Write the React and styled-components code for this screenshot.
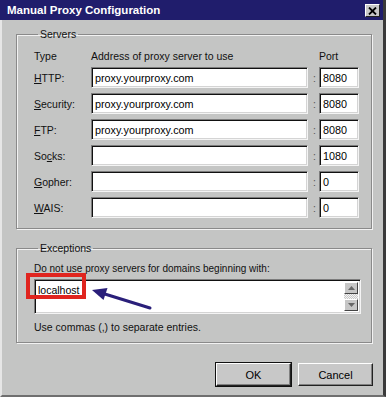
import React from 'react'
import styled, {createGlobalStyle} from 'styled-components'

const Global = createGlobalStyle`
  html, body { margin: 0; padding: 0; background: #c4c5c4; }
  body { font-family: "Liberation Sans", Arial, sans-serif; font-size: 10.5px; color: #111; }
`

const Window = styled.div`
  width: 386px;
  height: 397px;
  box-sizing: border-box;
  background: #c4c5c4;
  border-left: 2px solid #e6e6e6;
  border-right: 3px solid #3a3a3a;
  border-bottom: 2px solid #6f6f6f;
  display: flex;
  flex-direction: column;
`

const TitleBar = styled.div`
  height: 20px;
  margin-left: -2px;
  background: #201d6c;
  color: #fff;
  font-weight: bold;
  font-size: 11.5px;
  display: flex;
  align-items: center;
  justify-content: space-between;
  padding: 0 3px 0 7px;
`

const CloseBtn = styled.div`
  width: 15px;
  height: 13px;
  background: #c8c8c8;
  box-sizing: border-box;
  border-top: 1px solid #fff;
  border-left: 1px solid #fff;
  border-right: 1px solid #222;
  border-bottom: 1px solid #222;
  display: flex;
  align-items: center;
  justify-content: center;
  margin-top: 1px;
`

const Body = styled.div`
  flex: 1;
  padding: 8px 11px 0 14px;
  display: flex;
  flex-direction: column;
`

const Group = styled.fieldset`
  margin: ${p => p.$m || 0};
  padding: ${p => p.$pad};
  border: 1px solid #8a8a8a;
  box-shadow: inset 1px 1px #f2f2f2, 1px 1px #f2f2f2;
  min-width: 0;
`

const Legend = styled.legend`
  padding: 0 2px;
  margin-left: 4px;
  line-height: 13px;
`

const ServerGrid = styled.div`
  display: grid;
  grid-template-columns: 57px 217px 11px 40px;
  grid-auto-rows: 21px;
  row-gap: 5px;
  align-items: center;
`

const HeadCell = styled.div`
  align-self: end;
  line-height: 14px;
  margin-bottom: -1px;
`

const Label = styled.div`
  line-height: 14px;
  u { text-decoration: underline; text-underline-offset: 1px; }
`

const Field = styled.div`
  height: 21px;
  box-sizing: border-box;
  background: #fff;
  border-top: 1px solid #7c7c7c;
  border-left: 1px solid #7c7c7c;
  border-right: 1px solid #f4f4f4;
  border-bottom: 1px solid #f4f4f4;
  box-shadow: inset 1px 1px #111, inset -1px -1px #d4d4d4;
  padding: 0 0 0 3px;
  display: flex;
  align-items: center;
  font-size: 10.8px;
  color: #000;
`

const Colon = styled.div`
  text-align: center;
  color: #555;
  padding-left: 2px;
`

const ExceptText = styled.div`
  line-height: 14px;
  margin: ${p => p.$m};
  font-size: ${p => p.$size || 'inherit'};
`

const AreaWrap = styled.div`
  position: relative;
`

const TextArea = styled.div`
  height: 35px;
  box-sizing: border-box;
  background: #fff;
  border-top: 1px solid #7c7c7c;
  border-left: 1px solid #7c7c7c;
  border-right: 1px solid #f4f4f4;
  border-bottom: 1px solid #f4f4f4;
  box-shadow: inset 1px 1px #111, inset -1px -1px #d4d4d4;
  display: flex;
  justify-content: space-between;
  padding: 2px;
`

const AreaText = styled.div`
  padding: 1px 0 0 1px;
  font-size: 10.5px;
  line-height: 14px;
  color: #000;
`

const ScrollBar = styled.div`
  width: 14px;
  display: flex;
  flex-direction: column;
  justify-content: space-between;
  background-color: #e8e8e8;
  background-image: repeating-conic-gradient(#c8c8c8 0 25%, #f4f4f4 0 50%);
  background-size: 2px 2px;
`

const ArrowBtn = styled.div`
  height: 12px;
  background: #c6c6c6;
  box-sizing: border-box;
  border-top: 1px solid #fff;
  border-left: 1px solid #fff;
  border-right: 1px solid #444;
  border-bottom: 1px solid #444;
  display: flex;
  align-items: center;
  justify-content: center;
`

const RedBox = styled.div`
  position: absolute;
  left: -8px;
  top: -6px;
  width: 60px;
  height: 26px;
  box-sizing: border-box;
  border: 4px solid #e0251f;
`

const Pointer = styled.svg`
  position: absolute;
  left: 51px;
  top: 4px;
`

const Buttons = styled.div`
  display: flex;
  justify-content: flex-end;
  gap: 7px;
  margin-top: 20px;
  margin-right: -1px;
`

const Button = styled.button`
  width: 75px;
  height: 23px;
  font: inherit;
  font-size: 11px;
  color: #000;
  background: #c8c8c8;
  border-top: 1px solid #fff;
  border-left: 1px solid #fff;
  border-right: 1px solid #222;
  border-bottom: 1px solid #222;
  box-shadow: ${p => p.$default ? '0 0 0 1px #111, inset -1px -1px #808080' : 'inset -1px -1px #808080'};
  padding: 0;
`

const rows = [
  {key: 'H', rest: 'TTP:', host: 'proxy.yourproxy.com', port: '8080'},
  {key: 'S', rest: 'ecurity:', host: 'proxy.yourproxy.com', port: '8080'},
  {key: 'F', rest: 'TP:', host: 'proxy.yourproxy.com', port: '8080'},
  {pre: 'So', key: 'c', rest: 'ks:', host: '', port: '1080'},
  {key: 'G', rest: 'opher:', host: '', port: '0'},
  {key: 'W', rest: 'AIS:', host: '', port: '0'},
]

const Tri = ({up}) => (
  <svg width="7" height="4" viewBox="0 0 7 4">
    <polygon points={up ? '3.5,0 7,4 0,4' : '0,0 7,0 3.5,4'} fill="#666" />
  </svg>
)

export default function App() {
  return (
    <>
      <Global />
      <Window>
        <TitleBar>
          <span>Manual Proxy Configuration</span>
          <CloseBtn>
            <svg width="9" height="8" viewBox="0 0 9 8">
              <path d="M1 0.5 L8 7.5 M8 0.5 L1 7.5" stroke="#000" strokeWidth="1.8" />
            </svg>
          </CloseBtn>
        </TitleBar>
        <Body>
          <Group $pad="0 12px 10px 17px">
            <Legend>Servers</Legend>
            <ServerGrid>
              <HeadCell>Type</HeadCell>
              <HeadCell>Address of proxy server to use</HeadCell>
              <HeadCell />
              <HeadCell>Port</HeadCell>
              {rows.map(r => (
                <React.Fragment key={r.key}>
                  <Label>{r.pre}<u>{r.key}</u>{r.rest}</Label>
                  <Field>{r.host}</Field>
                  <Colon>:</Colon>
                  <Field>{r.port}</Field>
                </React.Fragment>
              ))}
            </ServerGrid>
          </Group>
          <Group $pad="0 10px 8px 17px" $m="13px 0 0">
            <Legend>Exceptions</Legend>
            <ExceptText $m="7px 0 3px" $size="10px">Do not use proxy servers for domains beginning with:</ExceptText>
            <AreaWrap>
              <TextArea>
                <AreaText>localhost</AreaText>
                <ScrollBar>
                  <ArrowBtn><Tri up /></ArrowBtn>
                  <ArrowBtn><Tri /></ArrowBtn>
                </ScrollBar>
              </TextArea>
              <RedBox />
              <Pointer width="70" height="30" viewBox="0 0 70 30">
                <line x1="65" y1="25" x2="19" y2="10.7" stroke="#2a1f7a" strokeWidth="3" strokeLinecap="round" />
                <polygon points="7,7 22.5,5 18.5,17" fill="#2a1f7a" />
              </Pointer>
            </AreaWrap>
            <ExceptText $m="6px 0 0">Use commas (,) to separate entries.</ExceptText>
          </Group>
          <Buttons>
            <Button $default>OK</Button>
            <Button>Cancel</Button>
          </Buttons>
        </Body>
      </Window>
    </>
  )
}
